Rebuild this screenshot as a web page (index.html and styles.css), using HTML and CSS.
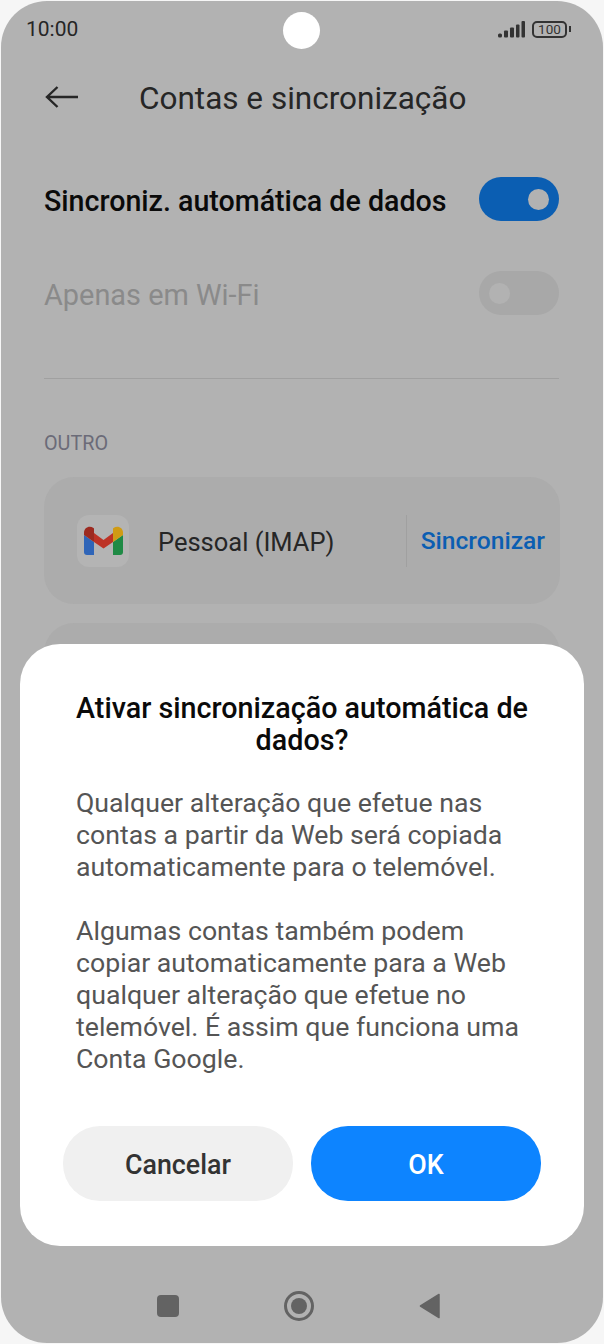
FILE: index.html
```html
<!DOCTYPE html>
<html lang="pt">
<head>
    <meta charset="UTF-8">
    <meta name="viewport" content="width=device-width, initial-scale=1.0">
    <title>Contas e sincronização</title>
    <link rel="stylesheet" href="styles.css">
</head>
<body>
    <div class="phone">
        <div class="status">
            <span class="time">10:00</span>
            <span class="camera"></span>
            <div class="status-icons">
                <svg class="signal" width="27" height="17" viewBox="0 0 27 17">
                    <rect x="0" y="12.500" width="4" height="4" rx="1.500"/>
                    <rect x="6" y="9.500" width="4" height="7" rx="1"/>
                    <rect x="12" y="6.500" width="4" height="10" rx="1"/>
                    <rect x="18" y="3.500" width="3.500" height="13" rx="1"/>
                    <rect x="23.500" y="0" width="3.500" height="16.500" rx="1"/>
                </svg>
                <div class="battery"><span>100</span></div>
                <span class="battery-tip"></span>
            </div>
        </div>

        <header class="topbar">
            <svg class="back" width="34" height="24" viewBox="0 0 34 24">
                <path d="M33 12H2M12.500 2L2 12l10.500 10" fill="none" stroke="#262626" stroke-width="2.400"/>
            </svg>
            <h1>Contas e sincronização</h1>
        </header>

        <div class="row row-first">
            <span class="row-label">Sincroniz. automática de dados</span>
            <span class="switch switch-on"><i></i></span>
        </div>
        <div class="row row-off">
            <span class="row-label">Apenas em Wi-Fi</span>
            <span class="switch switch-off"><i></i></span>
        </div>

        <hr class="divider">
        <p class="section">OUTRO</p>

        <div class="card">
            <div class="app-icon">
                <svg width="39" height="29" viewBox="0 0 39 29">
                    <path d="M0 9l10 7v13H3a3 3 0 0 1-3-3z" fill="#2f65b8"/>
                    <path d="M39 9l-10 7v13h7a3 3 0 0 0 3-3z" fill="#1f8a45"/>
                    <path d="M10 7l9.500 7L29 7v9l-9.500 6.500L10 16z" fill="#bd3326"/>
                    <path d="M0 9V6.500C0 1.500 5.500-1 9.500 2l.5.500V16z" fill="#9c2a20"/>
                    <path d="M39 9V6.500C39 1.500 33.500-1 29.500 2l-.5.500V16z" fill="#d09b14"/>
                </svg>
            </div>
            <span class="card-name">Pessoal (IMAP)</span>
            <span class="card-sync">Sincronizar</span>
        </div>
        <div class="card card-next"></div>

        <nav class="navbar">
            <span class="nav-square"></span>
            <span class="nav-home"><i></i></span>
            <svg width="21" height="26" viewBox="0 0 21 26">
                <path d="M20 1.500L1.500 13 20 24.500z" fill="#636363" stroke="#636363" stroke-width="1.500" stroke-linejoin="round"/>
            </svg>
        </nav>

        <section class="dialog">
            <h2>Ativar sincronização automática de dados?</h2>
            <p>Qualquer alteração que efetue nas contas a partir da Web será copiada automaticamente para o telemóvel.</p>
            <p>Algumas contas também podem copiar automaticamente para a Web qualquer alteração que efetue no telemóvel. É assim que funciona uma Conta Google.</p>
            <div class="buttons">
                <button class="btn btn-cancel">Cancelar</button>
                <button class="btn btn-ok">OK</button>
            </div>
        </section>
    </div>
</body>
</html>
```

FILE: styles.css
```css
* {
    font-family: Roboto, "Liberation Sans", sans-serif;
    box-sizing: border-box;
    margin: 0;
    padding: 0;
}

body {
    background-color: #f6f6f6;
}

.phone {
    position: relative;
    display: flex;
    flex-direction: column;
    width: 602px;
    height: 1342px;
    margin: 1px;
    overflow: hidden;
    background-color: #b2b2b2;
    border-radius: 46px;
}

.status {
    position: relative;
    display: flex;
    justify-content: space-between;
    align-items: center;
    height: 56px;
    padding: 0 32px 0 25px;
}

.time {
    font-size: 21px;
    color: #262626;
}

.camera {
    position: absolute;
    left: 282px;
    top: 11px;
    width: 37px;
    height: 37px;
    background-color: white;
    border-radius: 50%;
}

.status-icons {
    display: flex;
    align-items: center;
    color: #333;
}

.signal {
    fill: #333;
    margin-right: 7px;
}

.battery {
    width: 35px;
    height: 17px;
    border: 2px solid #333;
    border-radius: 5px;
    text-align: center;
}

.battery span {
    display: block;
    font-size: 13.500px;
    line-height: 13px;
}

.battery-tip {
    width: 2px;
    height: 6px;
    margin-left: 2px;
    background-color: #333;
}

.topbar {
    display: flex;
    align-items: center;
    height: 80px;
    padding-left: 44px;
}

.back {
    margin-right: 60px;
}

.topbar h1 {
    padding-top: 2px;
    font-size: 31.500px;
    font-weight: 400;
    color: #262626;
}

.row {
    display: flex;
    justify-content: space-between;
    align-items: center;
    height: 44px;
    padding: 0 44px 0 43px;
}

.row-first {
    margin-top: 40px;
}

.row-off {
    margin-top: 50px;
}

.row-label {
    padding-top: 4px;
    font-size: 28.600px;
    font-weight: 500;
    color: #0a0a0a;
}

.row-off .row-label {
    font-size: 28.900px;
    font-weight: 400;
    color: #8a8a8a;
}

.switch {
    display: flex;
    align-items: center;
    width: 80px;
    height: 44px;
    padding: 0 10px;
    border-radius: 22px;
}

.switch i {
    width: 21px;
    height: 21px;
    border-radius: 50%;
}

.switch-on {
    justify-content: flex-end;
    background-color: #0b5eb2;
}

.switch-on i {
    background-color: #b2b2b2;
}

.switch-off {
    background-color: #a8a8a8;
}

.switch-off i {
    background-color: #b2b2b2;
}

.divider {
    margin: 63px 44px 0 43px;
    border: none;
    border-top: 1px solid #a0a0a0;
}

.section {
    margin: 54px 0 0 43px;
    font-size: 19.800px;
    line-height: 22px;
    color: #6b6b78;
}

.card {
    display: flex;
    align-items: center;
    height: 127px;
    margin: 22px 43px 0;
    padding: 0 15px 0 33px;
    background-color: #acacac;
    border-radius: 30px;
}

.card-next {
    margin-top: 19px;
    flex-shrink: 0;
}

.app-icon {
    display: flex;
    justify-content: center;
    align-items: center;
    width: 52px;
    height: 52px;
    background-color: #b4b4b4;
    border-radius: 12px;
}

.card-name {
    flex: 1;
    margin-left: 29px;
    padding-top: 2px;
    font-size: 25.500px;
    color: #262626;
}

.card-sync {
    padding-left: 14px;
    font-size: 24.600px;
    font-weight: 500;
    line-height: 52px;
    color: #0b5eb2;
    border-left: 1px solid #a0a0a0;
}

.navbar {
    position: absolute;
    left: 0;
    right: 0;
    bottom: 22px;
    display: flex;
    align-items: center;
    gap: 105px;
    padding-left: 156px;
}

.nav-square {
    width: 22px;
    height: 22px;
    background-color: #636363;
    border-radius: 4px;
}

.nav-home {
    display: flex;
    justify-content: center;
    align-items: center;
    width: 30px;
    height: 30px;
    border: 3px solid #636363;
    border-radius: 50%;
}

.nav-home i {
    width: 16px;
    height: 16px;
    background-color: #636363;
    border-radius: 50%;
}

.dialog {
    position: absolute;
    left: 19px;
    top: 643px;
    width: 564px;
    height: 602px;
    padding: 48px 43px 0;
    background-color: white;
    border-radius: 40px;
}

.dialog h2 {
    margin: 0 0 31px;
    font-size: 28.700px;
    font-weight: 500;
    line-height: 32px;
    text-align: center;
    color: #0a0a0a;
}

.dialog p {
    margin: 0 12px 32px 13px;
    font-size: 26.700px;
    line-height: 32px;
    color: #555;
}

.buttons {
    display: flex;
    gap: 18px;
    margin-top: 51px;
}

.btn {
    flex: 1;
    height: 75px;
    padding-top: 3px;
    font-size: 26.800px;
    font-weight: 500;
    border: none;
    border-radius: 37px;
}

.btn-cancel {
    background-color: #f0f0f0;
    color: #333;
}

.btn-ok {
    background-color: #0d84ff;
    color: white;
}
```
